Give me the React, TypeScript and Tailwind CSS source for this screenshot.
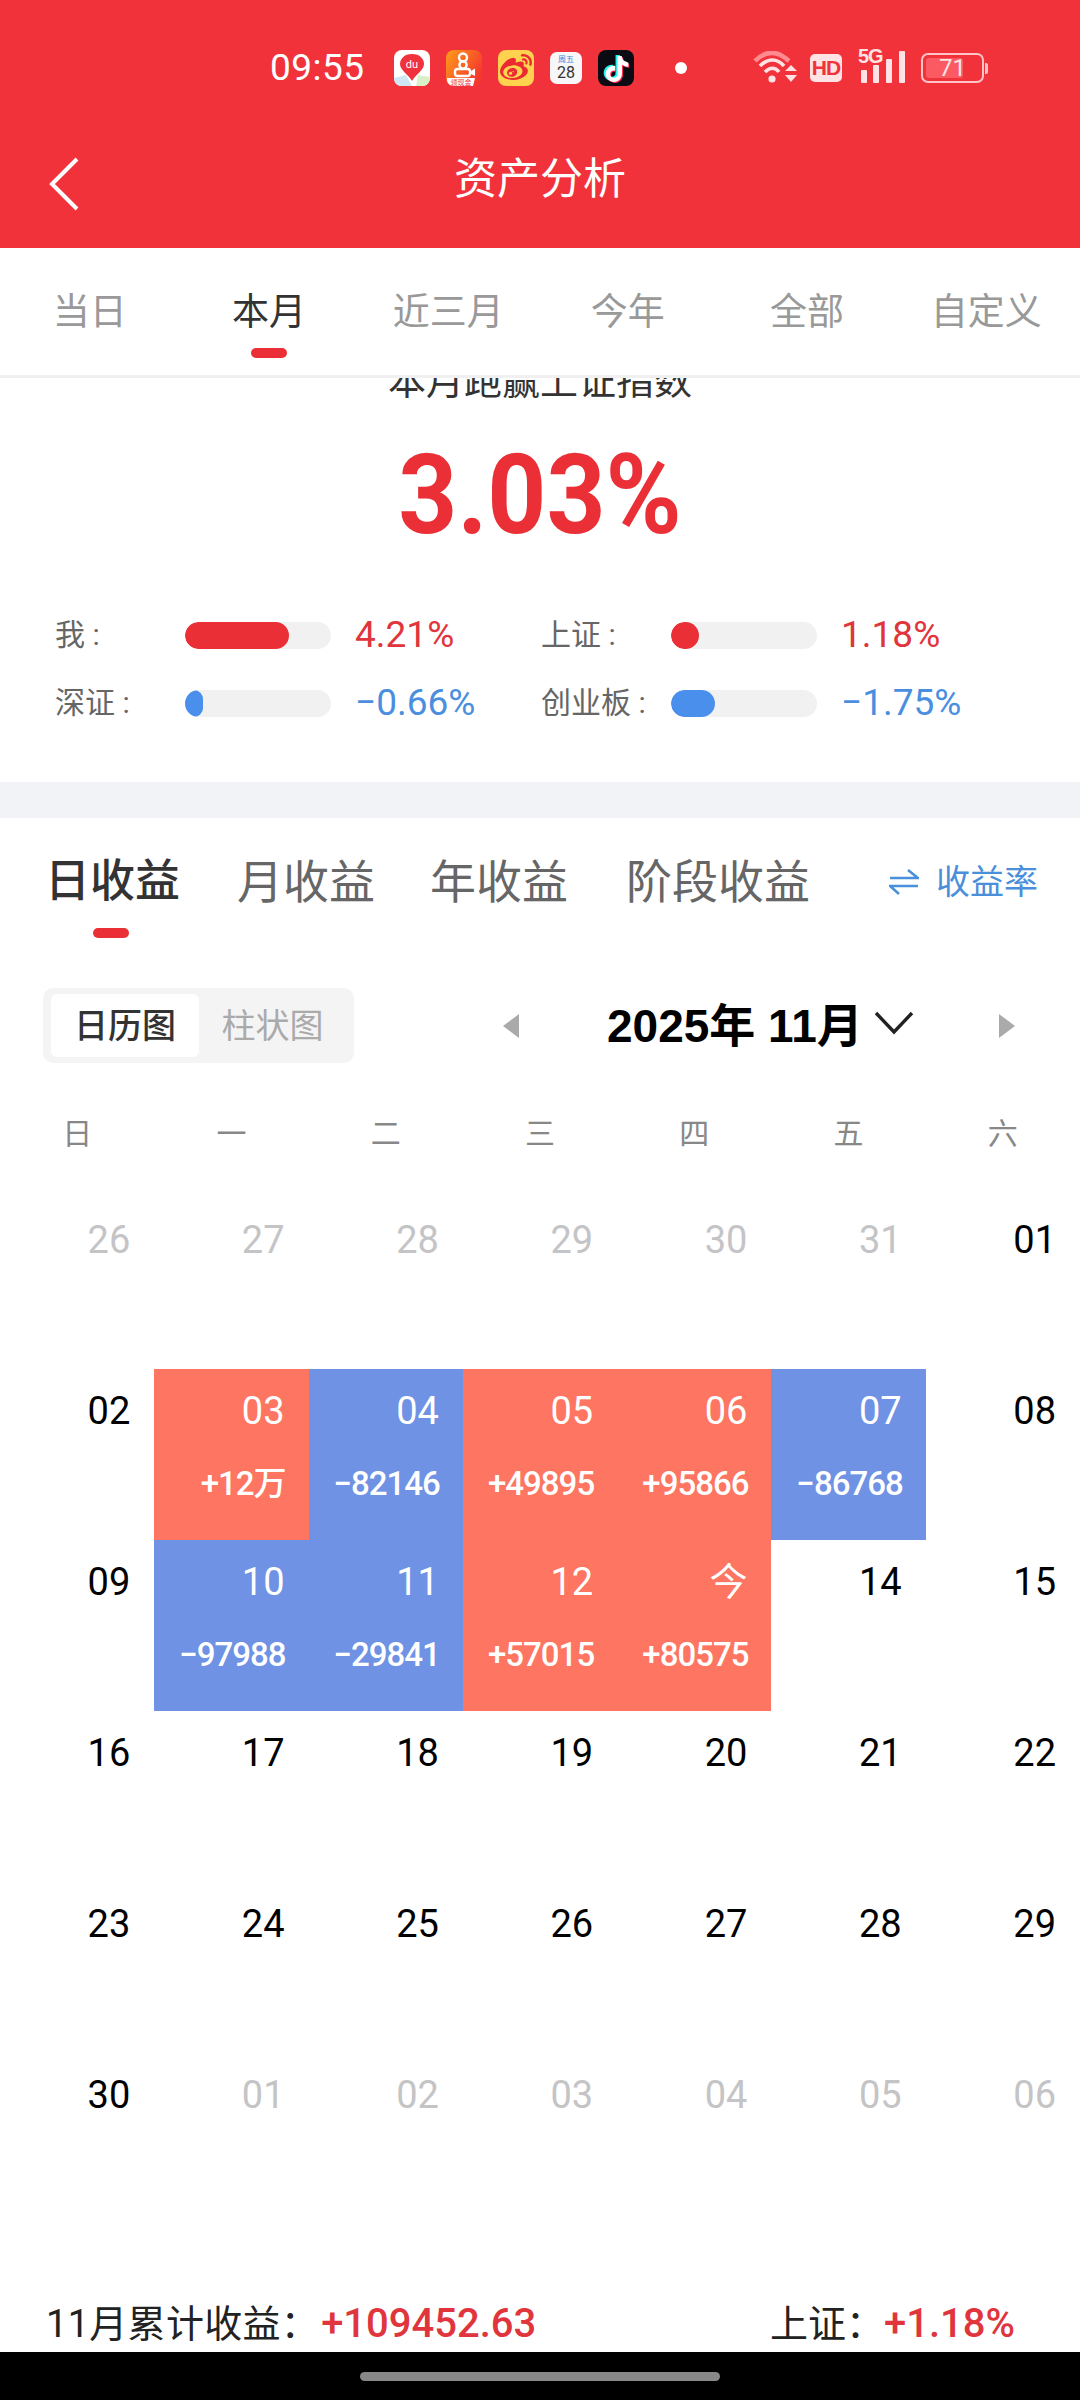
import React from "react";
import { SiTiktok } from "react-icons/si";
import { FaWeibo } from "react-icons/fa";

const topTabs = ["当日", "本月", "近三月", "今年", "全部", "自定义"];
const weekDays = ["日", "一", "二", "三", "四", "五", "六"];

type Cell = { d: string; v?: string; c?: "r" | "b"; muted?: boolean };
const cells: Cell[] = [
  { d: "26", muted: true }, { d: "27", muted: true }, { d: "28", muted: true }, { d: "29", muted: true }, { d: "30", muted: true }, { d: "31", muted: true }, { d: "01" },
  { d: "02" }, { d: "03", v: "+12万", c: "r" }, { d: "04", v: "−82146", c: "b" }, { d: "05", v: "+49895", c: "r" }, { d: "06", v: "+95866", c: "r" }, { d: "07", v: "−86768", c: "b" }, { d: "08" },
  { d: "09" }, { d: "10", v: "−97988", c: "b" }, { d: "11", v: "−29841", c: "b" }, { d: "12", v: "+57015", c: "r" }, { d: "今", v: "+80575", c: "r" }, { d: "14" }, { d: "15" },
  { d: "16" }, { d: "17" }, { d: "18" }, { d: "19" }, { d: "20" }, { d: "21" }, { d: "22" },
  { d: "23" }, { d: "24" }, { d: "25" }, { d: "26" }, { d: "27" }, { d: "28" }, { d: "29" },
  { d: "30" }, { d: "01", muted: true }, { d: "02", muted: true }, { d: "03", muted: true }, { d: "04", muted: true }, { d: "05", muted: true }, { d: "06", muted: true },
];

function BaiduIcon() {
  return (
    <svg width="36" height="36" viewBox="0 0 36 36" className="shrink-0">
      <rect width="36" height="36" rx="8" fill="#fff" />
      <path d="M0 28 L12 25 L18 36 L8 36 C3 36 0 33 0 28 Z" fill="#cfe6f5" />
      <path d="M24 25 L36 27 C36 33 33 36 28 36 L22 36 Z" fill="#d8efc8" />
      <path d="M18 4 C26 4 30 9 30 14 C30 20 22 24 18 31 C14 24 6 20 6 14 C6 9 10 4 18 4 Z" fill="#f0323c" />
      <text x="18" y="18" textAnchor="middle" fontSize="11" fill="#fff" fontFamily="Roboto, sans-serif">du</text>
    </svg>
  );
}

function KuaishouIcon() {
  return (
    <svg width="36" height="36" viewBox="0 0 36 36" className="shrink-0">
      <defs>
        <linearGradient id="ks" x1="0" y1="0" x2="1" y2="0.6">
          <stop offset="0" stopColor="#ff9c1a" />
          <stop offset="1" stopColor="#f5382d" />
        </linearGradient>
      </defs>
      <rect width="36" height="36" rx="8" fill="url(#ks)" />
      <circle cx="17" cy="7.5" r="4" fill="none" stroke="#fff" strokeWidth="2.4" />
      <circle cx="17" cy="15" r="3.6" fill="none" stroke="#fff" strokeWidth="2.4" />
      <rect x="9" y="19" width="15" height="7" rx="2.5" fill="none" stroke="#fff" strokeWidth="2.4" />
      <path d="M25 21 L29 18.5 L29 26 L25 24 Z" fill="#fff" />
      <path d="M1 28 L29 28 L27 36 L8 36 C4 36 1 33 1 30 Z" fill="#fff" />
      <text x="15" y="35" textAnchor="middle" fontSize="7" fill="#e33" fontFamily="'Noto Sans CJK SC', sans-serif">领现金</text>
    </svg>
  );
}

function WeiboIcon() {
  return (
    <div className="relative w-[36px] h-[36px] rounded-[8px] bg-[#fdd24f] flex items-center justify-center shrink-0 overflow-hidden">
      <FaWeibo size={32} color="#ec2a32" />
    </div>
  );
}

function CalendarIcon() {
  return (
    <div className="w-[32px] h-[32px] rounded-[7px] bg-[#f7f7f9] flex flex-col items-center justify-start shrink-0 overflow-hidden">
      <span className="text-[8px] leading-[9px] mt-[3px] text-[#3a84d8]">周五</span>
      <span className="text-[16px] leading-[17px] text-[#333]">28</span>
    </div>
  );
}

function TiktokIcon() {
  return (
    <div className="relative w-[36px] h-[36px] rounded-[8px] bg-[#0b0b14] shrink-0 overflow-hidden">
      <SiTiktok size={26} color="#25f4ee" className="absolute left-[4px] top-[5px]" />
      <SiTiktok size={26} color="#fe2c55" className="absolute left-[7px] top-[7px]" />
      <SiTiktok size={26} color="#ffffff" className="absolute left-[5.5px] top-[6px]" />
    </div>
  );
}

function StatusRight() {
  return (
    <div className="flex items-center ml-[66px]">
      <svg width="46" height="34" viewBox="0 0 46 34" className="shrink-0">
        <path d="M2 10 C13 -1 24 -1 36 10" fill="none" stroke="#ff8a8f" strokeWidth="4.5" />
        <path d="M7 15 C15 7 24 7 31 15" fill="none" stroke="#ffe3e4" strokeWidth="3.6" />
        <path d="M12 21 C17 16 22 16 26 21" fill="none" stroke="#ffe3e4" strokeWidth="3.6" />
        <circle cx="19" cy="28" r="3.6" fill="#ffe3e4" />
        <path d="M32 20 L44 20 L38 14 Z M32 24 L44 24 L38 31 Z" fill="#ffe3e4" />
      </svg>
      <div className="w-[32px] h-[28px] rounded-[5px] bg-[#ffe3e4] ml-[11px] flex items-center justify-center text-[#f1323b] text-[21px] leading-[28px] font-bold tracking-[-1px] font-['Liberation_Sans',sans-serif]">HD</div>
      <div className="relative w-[48px] h-[34px] ml-[16px] shrink-0">
        <span className="absolute left-0 top-[-5px] text-[#ffe3e4] text-[20px] leading-[20px] font-bold tracking-[-1px] font-['Liberation_Sans',sans-serif]">5G</span>
        <svg width="48" height="34" viewBox="0 0 48 34">
          <rect x="3" y="19" width="6" height="13" rx="1" fill="#ffe3e4" />
          <rect x="15" y="14" width="6" height="18" rx="1" fill="#ffe3e4" />
          <rect x="28" y="8" width="6" height="24" rx="1" fill="#ffe3e4" />
          <rect x="41" y="0" width="6" height="32" rx="1" fill="#ffe3e4" />
        </svg>
      </div>
      <div className="flex items-center ml-[15px]">
        <div className="relative w-[63px] h-[30px] rounded-[7px] border-[2px] border-[#ffc4c6] p-[3px]">
          <div className="w-[37px] h-full rounded-[3px] bg-[#fb5a62]" />
          <span className="absolute inset-0 flex items-center justify-center text-[#ffe3e4] text-[24px] leading-[26px]">71</span>
        </div>
        <div className="w-[3px] h-[11px] ml-[1px] rounded-r-[2px] bg-[#ffc4c6]" />
      </div>
    </div>
  );
}

function Stat({ label, value, fill, blue }: { label: string; value: string; fill: number; blue?: boolean }) {
  return (
    <div className="flex items-center h-[40px]">
      <span className="w-[130px] text-[30px] leading-[40px] text-[#666]">{label}</span>
      <div className="w-[146px] h-[27px] rounded-full bg-[#f1f1f2] overflow-hidden shrink-0">
        <div className={blue ? "h-full rounded-full bg-[#4a8fec]" : "h-full rounded-full bg-[#ea2f36]"} style={{ width: fill }} />
      </div>
      <span className={blue ? "ml-[24px] text-[37px] leading-[40px] text-[#4a8fdf]" : "ml-[24px] text-[37px] leading-[40px] text-[#e0353c]"}>{value}</span>
    </div>
  );
}

export default function App() {
  return (
    <div className="w-[1080px] h-[2400px] flex flex-col overflow-hidden bg-white font-[Roboto,'Noto_Sans_CJK_SC',sans-serif]">
      <header className="h-[248px] shrink-0 bg-[#f1323b] text-white">
        <div className="h-[108px] pt-[50px] pl-[270px] flex items-start">
          <span className="w-[124px] text-[37px] leading-[36px] tracking-[0.5px]">09:55</span>
          <div className="flex items-center gap-[16px] h-[36px]">
            <BaiduIcon />
            <KuaishouIcon />
            <WeiboIcon />
            <CalendarIcon />
            <TiktokIcon />
            <div className="w-[12px] h-[12px] rounded-full bg-white ml-[25px]" />
          </div>
          <div className="h-[36px] flex items-center">
            <StatusRight />
          </div>
        </div>
        <div className="relative h-[140px] flex items-center justify-center">
          <svg width="32" height="56" viewBox="0 0 32 56" className="absolute left-[48px] top-[48px]">
            <path d="M29 3 L4 28 L29 53" fill="none" stroke="#fff" strokeWidth="4" />
          </svg>
          <h1 className="text-[43px] leading-[50px] font-normal mt-[2px]">资产分析</h1>
        </div>
      </header>

      <nav className="h-[130px] shrink-0 border-b-[3px] border-[#f0f0f0] grid grid-cols-6 pr-[4px]">
        {topTabs.map((t, i) => (
          <div key={t} className="flex flex-col items-center pt-[40px]">
            <span className={i === 1 ? "text-[37px] leading-[50px] text-[#333]" : "text-[37px] leading-[50px] text-[#999]"}>{t}</span>
            {i === 1 && <div className="mt-[10px] w-[36px] h-[10px] rounded-full bg-[#ea2f36]" />}
          </div>
        ))}
      </nav>

      <main className="flex-1 min-h-0 overflow-hidden">
        <section className="-mt-[16px]">
          <div className="text-center text-[38px] leading-[38px] text-[#333]">本月跑赢上证指数</div>
          <div className="mt-[40px] text-center h-[110px] text-[112px] leading-[110px] font-bold text-[#ea2f36]">
            <span className="inline-block scale-x-[0.92]">3.03%</span>
          </div>
          <div className="mt-[65px] pl-[55px] grid grid-cols-[486px_1fr] gap-y-[28px]">
            <Stat label="我 :" value="4.21%" fill={104} />
            <Stat label="上证 :" value="1.18%" fill={28} />
            <Stat label="深证 :" value="−0.66%" fill={18} blue />
            <Stat label="创业板 :" value="−1.75%" fill={44} blue />
          </div>
        </section>
        <div className="mt-[59px] h-[36px] bg-[#f2f3f7]" />

        <section className="pt-[38px]">
          <div className="flex items-center pl-[45px] pr-[42px] h-[50px] pt-[2px]">
            <div className="flex items-center text-[46px] leading-[50px] text-[#666]">
              <span className="text-[45px] font-medium text-[#333]">日收益</span>
              <span className="ml-[57px]">月收益</span>
              <span className="ml-[55px]">年收益</span>
              <span className="ml-[58px]">阶段收益</span>
            </div>
            <div className="ml-auto flex items-center text-[34px] leading-[50px] text-[#4a8fd9]">
              <svg width="30" height="26" viewBox="0 0 30 26" className="mr-[17px]">
                <path d="M1 9 L29 9 L19 1 M29 17 L1 17 L10 25" fill="none" stroke="#4a8fd9" strokeWidth="2.6" />
              </svg>
              <span>收益率</span>
            </div>
          </div>
          <div className="ml-[93px] mt-[22px] w-[36px] h-[10px] rounded-full bg-[#ea2f36]" />

          <div className="mt-[50px] pl-[43px] flex items-center h-[75px]">
            <div className="w-[311px] h-[75px] p-[6px_8px] rounded-[10px] bg-[#f4f4f5] flex items-center shrink-0">
              <div className="w-[148px] h-[63px] rounded-[6px] bg-white flex items-center justify-center text-[34px] leading-[40px] font-medium text-[#333]">日历图</div>
              <div className="flex-1 text-center text-[34px] leading-[40px] text-[#aaa]">柱状图</div>
            </div>
            <svg width="18" height="24" viewBox="0 0 18 24" className="ml-[148px] shrink-0">
              <path d="M17 0 L1 12 L17 24 Z" fill="#aaa" />
            </svg>
            <span className="ml-[87px] w-[260px] text-[46px] leading-[50px] font-bold text-black font-['Liberation_Sans','Noto_Sans_CJK_SC',sans-serif]">2025年 11月</span>
            <svg width="40" height="24" viewBox="0 0 40 24" className="ml-[7px] -mt-[6px] shrink-0">
              <path d="M2 2 L20 21 L38 2" fill="none" stroke="#222" strokeWidth="3.4" />
            </svg>
            <svg width="18" height="24" viewBox="0 0 18 24" className="ml-[84px] shrink-0">
              <path d="M1 0 L17 12 L1 24 Z" fill="#aaa" />
            </svg>
          </div>

          <div className="mt-[51px] grid grid-cols-7 text-center text-[30px] leading-[40px] text-[#888]">
            {weekDays.map((w) => (
              <span key={w}>{w}</span>
            ))}
          </div>

          <div className="mt-[44px] grid grid-cols-7 auto-rows-[171px]">
            {cells.map((c, i) => (
              <div
                key={i}
                className={
                  c.c === "r"
                    ? "flex flex-col items-end pt-[22px] pr-[24px] bg-[#fe7561] text-white"
                    : c.c === "b"
                    ? "flex flex-col items-end pt-[22px] pr-[24px] bg-[#6f92e4] text-white"
                    : c.muted
                    ? "flex flex-col items-end pt-[22px] pr-[24px] text-[#c4c4c6]"
                    : "flex flex-col items-end pt-[22px] pr-[24px] text-black"
                }
              >
                <span className="text-[38px] leading-[40px]">{c.d}</span>
                {c.v && <span className="mt-[33px] -mr-[1px] text-[33px] leading-[40px] tracking-[-1px] font-medium">{c.v}</span>}
              </div>
            ))}
          </div>

          <div className="mt-[75px] pl-[46px] pr-[65px] h-[50px] flex items-center justify-between text-[38px] leading-[50px] text-[#222]">
            <div className="tracking-[0.3px]">
              11月累计收益：<span className="ml-[2px] text-[40px] tracking-[0px] font-medium text-[#e0353c]">+109452.63</span>
            </div>
            <div>
              上证：<span className="text-[40px] tracking-[0px] font-medium text-[#e0353c]">+1.18%</span>
            </div>
          </div>
        </section>
      </main>

      <div className="h-[48px] shrink-0 bg-black flex items-center justify-center">
        <div className="w-[360px] h-[9px] rounded-full bg-[#888]" />
      </div>
    </div>
  );
}
